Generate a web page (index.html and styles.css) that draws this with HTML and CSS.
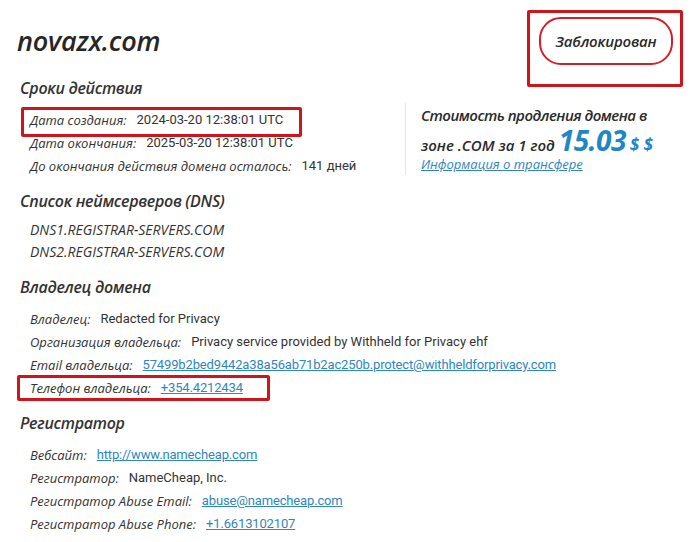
FILE: index.html
```html
<!DOCTYPE html>
<html lang="ru">
<head>
<meta charset="utf-8">
<title>novazx.com</title>
<link rel="stylesheet" href="styles.css">
</head>
<body>
<div class="page">
  <header class="header">
    <h1 class="domain">novazx.com</h1>
    <div class="badge-wrap">
      <div class="badge">Заблокирован</div>
      <span class="mark mark-badge"></span>
    </div>
  </header>

  <section class="section">
    <h2 class="heading">Сроки действия</h2>
    <div class="terms">
      <div class="list">
        <div class="row row-marked"><span class="label">Дата создания:</span><span class="value">2024-03-20 12:38:01 UTC</span><span class="mark mark-created"></span></div>
        <div class="row"><span class="label">Дата окончания:</span><span class="value">2025-03-20 12:38:01 UTC</span></div>
        <div class="row"><span class="label">До окончания действия домена осталось:</span><span class="value">141 дней</span></div>
      </div>
      <div class="price">
        <div class="price-line1">Стоимость продления домена в</div>
        <div class="price-line2">зоне .COM за 1 год <span class="amount">15.03</span> <span class="cur">$ $</span></div>
        <a class="link price-link" href="#">Информация о трансфере</a>
      </div>
    </div>
  </section>

  <section class="section">
    <h2 class="heading">Список неймсерверов (DNS)</h2>
    <div class="list list-dns">
      <div class="dns">DNS1.REGISTRAR-SERVERS.COM</div>
      <div class="dns">DNS2.REGISTRAR-SERVERS.COM</div>
    </div>
  </section>

  <section class="section">
    <h2 class="heading">Владелец домена</h2>
    <div class="list">
      <div class="row"><span class="label">Владелец:</span><span class="value">Redacted for Privacy</span></div>
      <div class="row"><span class="label">Организация владельца:</span><span class="value">Privacy service provided by Withheld for Privacy ehf</span></div>
      <div class="row"><span class="label">Email владельца:</span><a class="link" href="#">57499b2bed9442a38a56ab71b2ac250b.protect@withheldforprivacy.com</a></div>
      <div class="row row-marked"><span class="label">Телефон владельца:</span><a class="link" href="#">+354.4212434</a><span class="mark mark-phone"></span></div>
    </div>
  </section>

  <section class="section">
    <h2 class="heading">Регистратор</h2>
    <div class="list">
      <div class="row"><span class="label">Вебсайт:</span><a class="link" href="#">http://www.namecheap.com</a></div>
      <div class="row"><span class="label">Регистратор:</span><span class="value">NameCheap, Inc.</span></div>
      <div class="row"><span class="label">Регистратор Abuse Email:</span><a class="link" href="#">abuse@namecheap.com</a></div>
      <div class="row"><span class="label">Регистратор Abuse Phone:</span><a class="link" href="#">+1.6613102107</a></div>
    </div>
  </section>
</div>
</body>
</html>
```

FILE: styles.css
```css
* { box-sizing: border-box; }
html, body { margin: 0; padding: 0; background: #fff; }
body {
  font-family: "Open Sans", "DejaVu Sans", sans-serif;
  color: #333;
}
.page {
  padding: 17px 7px 0 17px;
}
.header {
  display: flex;
  justify-content: space-between;
  align-items: center;
  height: 48px;
}
.domain {
  margin: 0;
  font-size: 27px;
  font-weight: 600;
  font-style: italic;
  color: #262626;
  line-height: 48px;
  letter-spacing: -0.2px;
}
.badge-wrap {
  position: relative;
  margin-right: 10px;
}
.badge {
  width: 134px;
  height: 48px;
  border: 2px solid #d2202a;
  border-radius: 22px;
  display: flex;
  align-items: center;
  justify-content: center;
  font-size: 15px;
  font-style: italic;
  font-weight: 600;
  color: #2a2a2a;
  letter-spacing: -0.2px;
}
.mark {
  position: absolute;
  border: 3px solid #d0141c;
  border-radius: 2px;
  pointer-events: none;
}
.mark-badge { top: -7px; left: -12px; right: -10px; bottom: -22px; }

.section { margin-top: 12px; padding-left: 3px; }
.section:first-of-type { margin-top: 11px; }
.heading {
  margin: 0;
  font-size: 16px;
  line-height: 24px;
  font-weight: 600;
  font-style: italic;
  color: #333;
  letter-spacing: -0.3px;
}
.terms {
  display: flex;
  margin-top: 8px;
}
.list {
  margin-top: 8px;
  padding-left: 10px;
}
.terms .list { margin-top: 0; width: 385px; }
.list-dns { margin-top: 6px; }
.row {
  position: relative;
  display: flex;
  align-items: center;
  height: 23px;
  font-size: 13px;
  white-space: nowrap;
}
.label {
  font-style: italic;
  color: #333;
  margin-right: 10px;
}
.value {
  font-family: "Roboto", "Liberation Sans", sans-serif;
  color: #333;
}
.link {
  font-family: "Roboto", "Liberation Sans", sans-serif;
  color: #2f86c0;
  text-decoration: underline;
  letter-spacing: -0.15px;
}
.mark-created { top: -1px; left: -9px; width: 281px; bottom: -6px; }
.mark-phone { top: -1px; left: -13px; width: 253px; bottom: -2px; }

.dns {
  height: 22px;
  line-height: 22px;
  font-size: 14px;
  font-style: italic;
  color: #333;
}
.price {
  margin-top: -5px;
  border-left: 1px solid #e6e6e6;
  padding-left: 15px;
  height: 72px;
}
.price-line1 {
  height: 24px;
  line-height: 24px;
  font-size: 15px;
  font-style: italic;
  font-weight: 600;
  color: #2a2a2a;
  letter-spacing: -0.5px;
  white-space: nowrap;
}
.price-line2 {
  height: 26px;
  line-height: 26px;
  font-size: 15px;
  font-style: italic;
  font-weight: 600;
  color: #2a2a2a;
  white-space: nowrap;
}
.amount {
  font-size: 28px;
  line-height: 26px;
  font-weight: 700;
  color: #1f87c5;
  letter-spacing: -0.5px;
}
.cur {
  font-size: 17px;
  line-height: 26px;
  font-weight: 700;
  color: #1f87c5;
}
.price-link {
  display: block;
  height: 22px;
  line-height: 22px;
  font-family: "Open Sans", sans-serif;
  font-style: italic;
  font-size: 13px;
  letter-spacing: 0;
}
```
